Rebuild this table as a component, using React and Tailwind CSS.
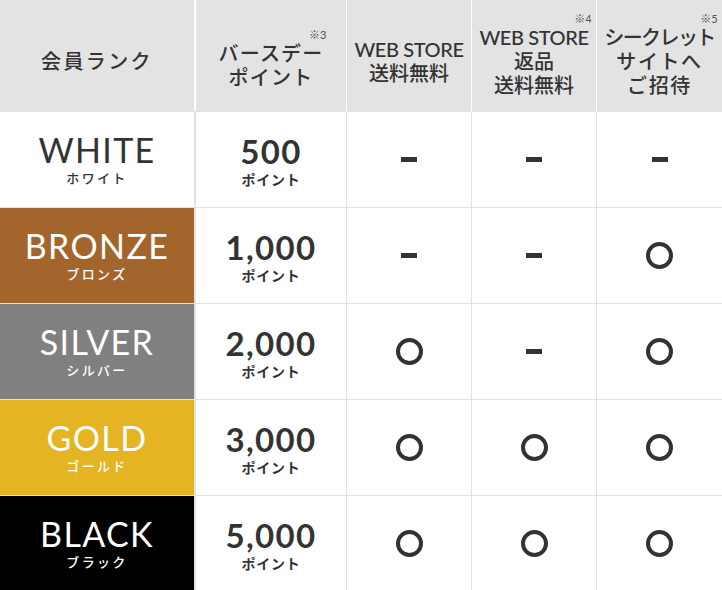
import React from 'react';

const ranks = [
  { en: 'WHITE', ja: 'ホワイト', bg: 'bg-white', text: 'text-[#333]', pts: '500', marks: ['-', '-', '-'] },
  { en: 'BRONZE', ja: 'ブロンズ', bg: 'bg-[#a4652c]', text: 'text-white', pts: '1,000', marks: ['-', '-', 'o'] },
  { en: 'SILVER', ja: 'シルバー', bg: 'bg-[#808080]', text: 'text-white', pts: '2,000', marks: ['o', '-', 'o'] },
  { en: 'GOLD', ja: 'ゴールド', bg: 'bg-[#e4b422]', text: 'text-white', pts: '3,000', marks: ['o', 'o', 'o'] },
  { en: 'BLACK', ja: 'ブラック', bg: 'bg-black', text: 'text-white', pts: '5,000', marks: ['o', 'o', 'o'] },
];

function Mark({ type }) {
  if (type === 'o') {
    return <span className="block w-[27px] h-[27px] rounded-full border-[4px] border-[#333]" />;
  }
  return <span className="block w-[16px] h-[5px] bg-[#333]" />;
}

// small ※ note mark sitting above the end of a header line
function Note({ n, className = 'right-[-3px]' }) {
  return (
    <span className={`absolute -top-[12px] ${className} text-[11px] leading-none text-[#555] font-normal tracking-normal`}>※{n}</span>
  );
}

export default function App() {
  const font = { fontFamily: 'Lato, "Noto Sans CJK JP", sans-serif' };
  return (
    <div className="w-[722px] h-[590px] overflow-hidden bg-white text-[#333]" style={font}>
      {/* header */}
      <div className="flex h-[111px] bg-[#e3e3e3] text-[20px] leading-[24px] font-medium">
        <div className="w-[194px] pt-[10px] flex items-center justify-center tracking-[0.12em]">会員ランク</div>
        <div className="w-[152px] pt-[19px] border-l-2 border-white flex flex-col items-center justify-center tracking-[0.06em]">
          <span className="relative">バースデー<Note n="3" /></span>
          <span>ポイント</span>
        </div>
        <div className="w-[125px] pt-[10px] border-l border-white flex flex-col items-center justify-center">
          <span className="tracking-[-0.02em] whitespace-nowrap">WEB STORE</span>
          <span>送料無料</span>
        </div>
        <div className="w-[125px] pt-[10px] border-l border-white flex flex-col items-center justify-center">
          <span className="relative tracking-[-0.02em] whitespace-nowrap">WEB STORE<Note n="4" /></span>
          <span>返品</span>
          <span>送料無料</span>
        </div>
        <div className="w-[126px] pt-[10px] border-l border-white flex flex-col items-center justify-center">
          <span className="relative whitespace-nowrap tracking-[-0.08em]">シークレット<Note n="5" className="right-[-3px]" /></span>
          <span className="tracking-[0.08em]">サイトへ</span>
          <span className="tracking-[0.08em]">ご招待</span>
        </div>
      </div>

      {/* rows */}
      {ranks.map(r => (
        <div key={r.en} className="flex h-[96px] border-t border-[#e2e2e2]">
          <div className={`w-[194px] pb-[4px] flex flex-col items-center justify-center ${r.bg} ${r.text}`}>
            <div className="text-[34px] leading-[41px] tracking-[0.04em] font-normal">{r.en}</div>
            <div className="text-[13px] leading-[16px] tracking-[0.18em] font-medium">{r.ja}</div>
          </div>
          <div className="w-[152px] border-l-2 border-[#e2e2e2] flex flex-col items-center justify-center">
            <div className="text-[33px] leading-[40px] font-bold tracking-[0.04em]">{r.pts}</div>
            <div className="text-[14px] leading-[17px] font-bold tracking-[0.05em]">ポイント</div>
          </div>
          <div className="w-[125px] border-l border-[#e2e2e2] flex items-center justify-center"><Mark type={r.marks[0]} /></div>
          <div className="w-[125px] border-l border-[#e2e2e2] flex items-center justify-center"><Mark type={r.marks[1]} /></div>
          <div className="w-[126px] border-l border-[#e2e2e2] flex items-center justify-center"><Mark type={r.marks[2]} /></div>
        </div>
      ))}
    </div>
  );
}
